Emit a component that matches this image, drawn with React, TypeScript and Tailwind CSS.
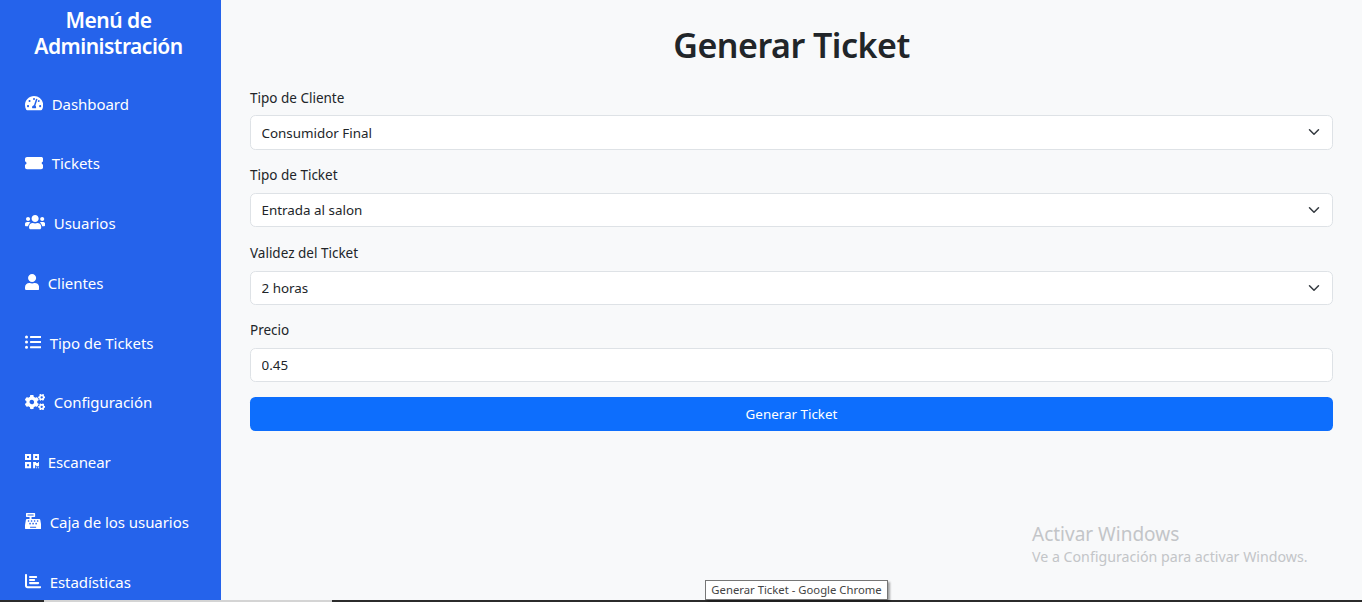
import { FaTachometerAlt, FaUsers, FaUser, FaListUl, FaCogs, FaQrcode, FaCashRegister } from 'react-icons/fa'
import { FaTicketSimple, FaChartBar } from 'react-icons/fa6'

const navItems = [
  { label: 'Dashboard', icon: FaTachometerAlt, size: 'w-[18.2px]' },
  { label: 'Tickets', icon: FaTicketSimple, size: 'w-[18.2px]' },
  { label: 'Usuarios', icon: FaUsers, size: 'w-[20.25px]' },
  { label: 'Clientes', icon: FaUser, size: 'w-[14.2px]' },
  { label: 'Tipo de Tickets', icon: FaListUl, size: 'w-[16.2px]' },
  { label: 'Configuración', icon: FaCogs, size: 'w-[20.25px]' },
  { label: 'Escanear', icon: FaQrcode, size: 'w-[14.2px]' },
  { label: 'Caja de los usuarios', icon: FaCashRegister, size: 'w-[16.2px]' },
  { label: 'Estadísticas', icon: FaChartBar, size: 'w-[16.2px]' },
]

const selects = [
  { label: 'Tipo de Cliente', value: 'Consumidor Final' },
  { label: 'Tipo de Ticket', value: 'Entrada al salon' },
  { label: 'Validez del Ticket', value: '2 horas' },
]

function SelectField({ label, value }: { label: string; value: string }) {
  return (
    <div className="mb-[14.67px]">
      <label className="block mb-[5.8px] leading-[23px] text-[13.5px]">{label}</label>
      <div className="relative">
        <select
          defaultValue={value}
          className="block w-full h-[34.2px] appearance-none bg-white border border-[#dee2e6] rounded-[5.4px] pl-[10.5px] pr-8 pt-[2px] leading-[21.6px] text-[#212529]"
        >
          <option>{value}</option>
        </select>
        <svg className="absolute right-[13.5px] top-[11px] w-[12px] h-[12px] pointer-events-none" viewBox="0 0 16 16" fill="none">
          <path d="m2 5 6 6 6-6" stroke="#343a40" strokeWidth="2" strokeLinecap="round" strokeLinejoin="round" />
        </svg>
      </div>
    </div>
  )
}

export default function App() {
  return (
    <div className="h-[602px] w-[1362px] overflow-hidden relative bg-[#f8f9fa] font-['Noto_Sans','Open_Sans',sans-serif] text-[#212529]">
      <div className="flex h-[600px]">
        {/* Sidebar */}
        <aside className="w-[221px] flex-shrink-0 bg-[#2563eb] text-white overflow-hidden">
          <h2 className="pt-[7px] pr-[4px] text-center text-[21px] leading-[26px] font-semibold tracking-[-0.5px]">
            Menú de<br />Administración
          </h2>
          <nav className="mt-[15px] pl-[25px]">
            {navItems.map(({ label, icon: Icon, size }) => (
              <a key={label} className="flex items-center gap-[8.5px] h-[59.75px] text-[15px] tracking-[-0.05px]">
                <Icon className={`flex-shrink-0 h-[16.2px] ${size} -mt-[2px]`} />
                {label}
              </a>
            ))}
          </nav>
        </aside>

        {/* Main content */}
        <main className="flex-1 px-[29px] text-[13.4px]">
          <h1 className="mt-[24px] mb-[19.4px] text-center text-[34px] leading-[43.2px] font-semibold tracking-[-0.5px]">Generar Ticket</h1>
          <form>
            {selects.map(s => <SelectField key={s.label} {...s} />)}
            <div className="mb-[14.67px]">
              <label className="block mb-[7.8px] leading-[21px] text-[13.5px]">Precio</label>
              <input
                defaultValue="0.45"
                className="block w-full h-[34px] bg-white border border-[#dee2e6] rounded-[5.4px] px-[10.5px] text-[#212529]"
              />
            </div>
            <button type="button" className="block w-full h-[34.2px] rounded-[5.4px] bg-[#0d6efd] text-white">
              Generar Ticket
            </button>
          </form>
        </main>
      </div>

      {/* Taskbar edge */}
      <div className="flex h-[2px]">
        <div className="w-[44px] bg-[#2b2b2b]" />
        <div className="w-[288px] bg-[#d4d4d4]" />
        <div className="flex-1 bg-[#2b2b2b]" />
      </div>

      {/* Windows watermark */}
      <div className="absolute left-[1032px] top-[522px] text-[#c3c5c8]">
        <div className="text-[19px] leading-[25px]">Activar Windows</div>
        <div className="text-[14.2px] leading-[20px]">Ve a Configuración para activar Windows.</div>
      </div>

      {/* Chrome tooltip */}
      <div className="absolute left-[705px] top-[580px] h-[20px] w-[183px] bg-white border border-[#767676] shadow-[2px_2px_2px_rgba(0,0,0,0.35)] text-[11.3px] leading-[18px] text-center text-[#444]">
        Generar Ticket - Google Chrome
      </div>
    </div>
  )
}
